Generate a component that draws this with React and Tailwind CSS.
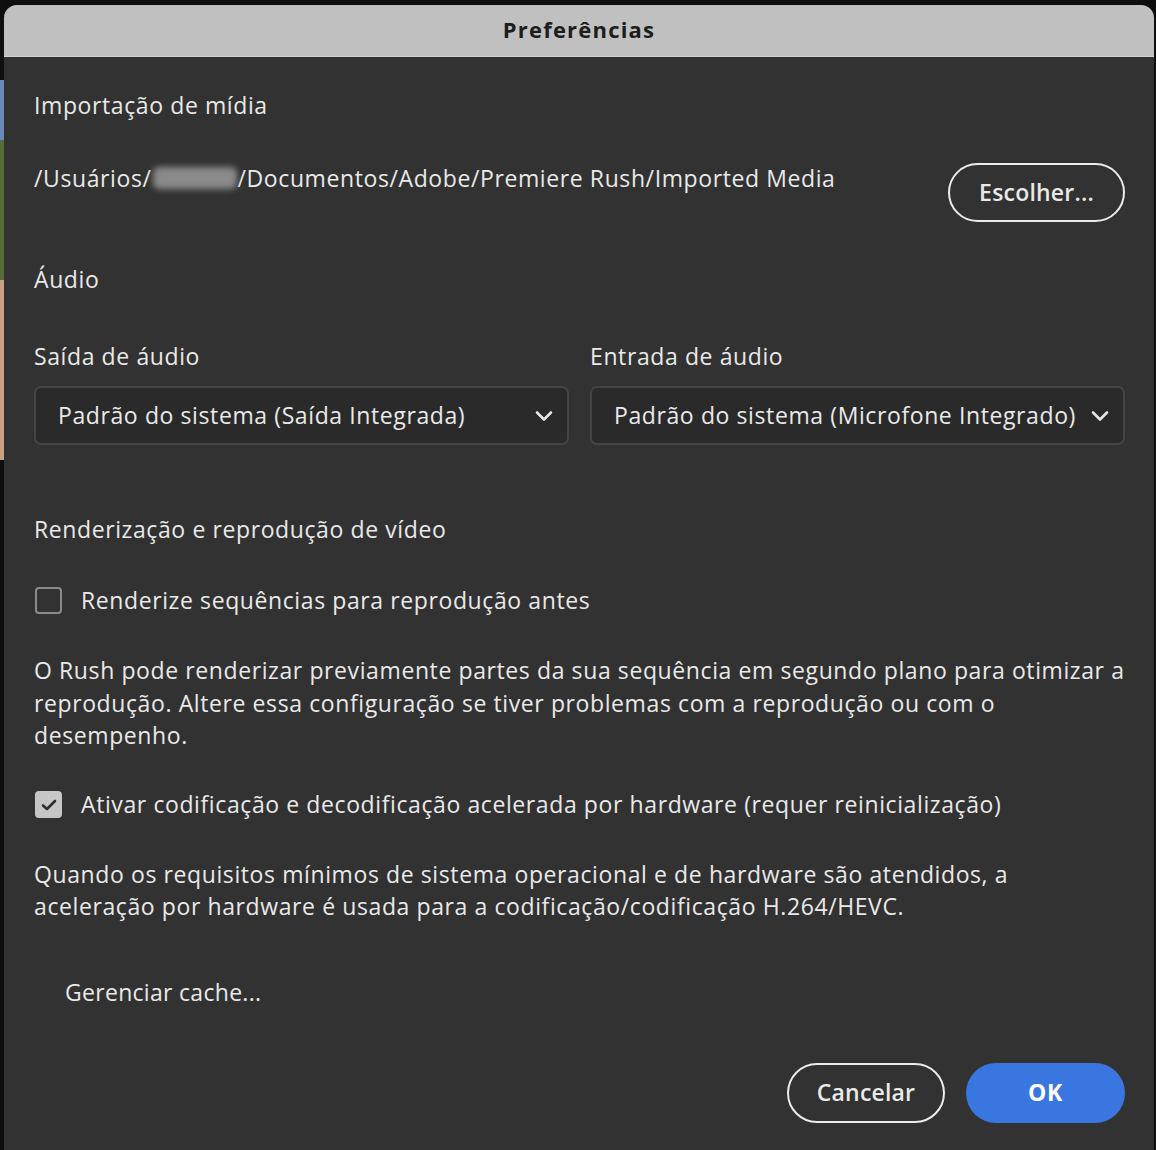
import React from 'react';

const font = { fontFamily: '"Open Sans", "Noto Sans", sans-serif' };

function Chevron() {
  return (
    <svg width="18" height="12" viewBox="0 0 18 12" fill="none">
      <path d="M2 2.5 L9 9.5 L16 2.5" stroke="#e6e6e6" strokeWidth="2.6" strokeLinecap="round" strokeLinejoin="round" />
    </svg>
  );
}

function Select({ label, value }) {
  return (
    <div className="flex flex-col">
      <div className="h-[32px] leading-[32px]">{label}</div>
      <div className="mt-[14px] h-[59px] rounded-[7px] border-2 border-[#444] bg-[#2a2a2a] flex items-center justify-between pl-[22px] pr-[14px]">
        <span className="whitespace-nowrap">{value}</span>
        <Chevron />
      </div>
    </div>
  );
}

function Checkbox({ checked, label }) {
  return (
    <div className="flex items-center h-[32px]">
      {checked ? (
        <div className="w-[27px] h-[27px] ml-[1px] rounded-[4px] bg-[#c6c6c6] flex items-center justify-center">
          <svg width="18" height="14" viewBox="0 0 18 14" fill="none">
            <path d="M3 7.5 L7 11 L15 3" stroke="#2e2e2e" strokeWidth="2.6" strokeLinecap="round" strokeLinejoin="round" />
          </svg>
        </div>
      ) : (
        <div className="w-[27px] h-[27px] ml-[1px] rounded-[4px] border-[2.5px] border-[#8a8a8a]" />
      )}
      <span className="ml-[19px] whitespace-nowrap">{label}</span>
    </div>
  );
}

export default function App() {
  return (
    <div className="w-[1156px] h-[1150px] bg-[#0e0e0e] overflow-hidden flex" style={font}>
      <div className="w-[4px] flex flex-col">
        <div className="h-[80px] bg-[#101010]" />
        <div className="h-[60px] bg-[#6d89b8]" />
        <div className="h-[140px] bg-[#5a6b3a]" />
        <div className="h-[180px] bg-[#c9a184]" />
        <div className="flex-1 bg-[#0e0e0e]" />
      </div>
      <div className="mt-[5px] w-[1150px] h-[1160px] rounded-t-[13px] bg-[#323232] overflow-hidden text-[#e9e9e9] text-[23px] font-medium tracking-[0.6px]">
        <div className="h-[52px] bg-[#c0c0c0] border-b border-[#d4d4d4] flex items-center justify-center">
          <span className="text-[#1d1d1d] font-bold text-[22px] tracking-[1.2px] -mt-[2px]">Preferências</span>
        </div>
        <div className="pl-[30px] pr-[29px]">
          <div className="mt-[32px] h-[32px] leading-[32px]">Importação de mídia</div>
          <div className="mt-[41px] flex items-start justify-between">
            <div className="h-[32px] leading-[32px] whitespace-nowrap flex items-center">
              <span>/Usuários/</span>
              <span className="inline-block w-[84px] h-[22px] mx-[1px] rounded-[6px] bg-[#8a8a8a] blur-[3px]" />
              <span>/Documentos/Adobe/Premiere Rush/Imported Media</span>
            </div>
            <button className="mt-[1px] w-[177px] h-[59px] rounded-full border-[2.5px] border-[#ececec] text-[23px] font-semibold tracking-[0.2px] text-[#e9e9e9] leading-none">
              Escolher...
            </button>
          </div>
          <div className="mt-[41px] h-[32px] leading-[32px]">Áudio</div>
          <div className="mt-[45px] grid grid-cols-2 gap-[21px]">
            <Select label="Saída de áudio" value="Padrão do sistema (Saída Integrada)" />
            <Select label="Entrada de áudio" value="Padrão do sistema (Microfone Integrado)" />
          </div>
          <div className="mt-[68px] h-[32px] leading-[32px]">Renderização e reprodução de vídeo</div>
          <div className="mt-[39px]">
            <Checkbox checked={false} label="Renderize sequências para reprodução antes" />
          </div>
          <p className="mt-[38px] leading-[32.5px] mr-[-6px]">
            O Rush pode renderizar previamente partes da sua sequência em segundo plano para otimizar a reprodução. Altere essa configuração se tiver problemas com a reprodução ou com o desempenho.
          </p>
          <div className="mt-[37px]">
            <Checkbox checked label="Ativar codificação e decodificação acelerada por hardware (requer reinicialização)" />
          </div>
          <p className="mt-[37px] leading-[32px] pr-[100px]">
            Quando os requisitos mínimos de sistema operacional e de hardware são atendidos, a aceleração por hardware é usada para a codificação/codificação H.264/HEVC.
          </p>
          <div className="mt-[54px] pl-[31px] h-[32px] leading-[32px] tracking-[0.3px]">Gerenciar cache...</div>
          <div className="mt-[55px] flex justify-end gap-[21px]">
            <button className="w-[158px] h-[60px] rounded-full border-[2.5px] border-[#ececec] text-[23px] font-semibold tracking-[0.2px] text-[#e9e9e9] leading-none">
              Cancelar
            </button>
            <button className="w-[159px] h-[60px] rounded-full bg-[#3a76df] text-[23px] font-bold text-white leading-none">
              OK
            </button>
          </div>
        </div>
      </div>
    </div>
  );
}
